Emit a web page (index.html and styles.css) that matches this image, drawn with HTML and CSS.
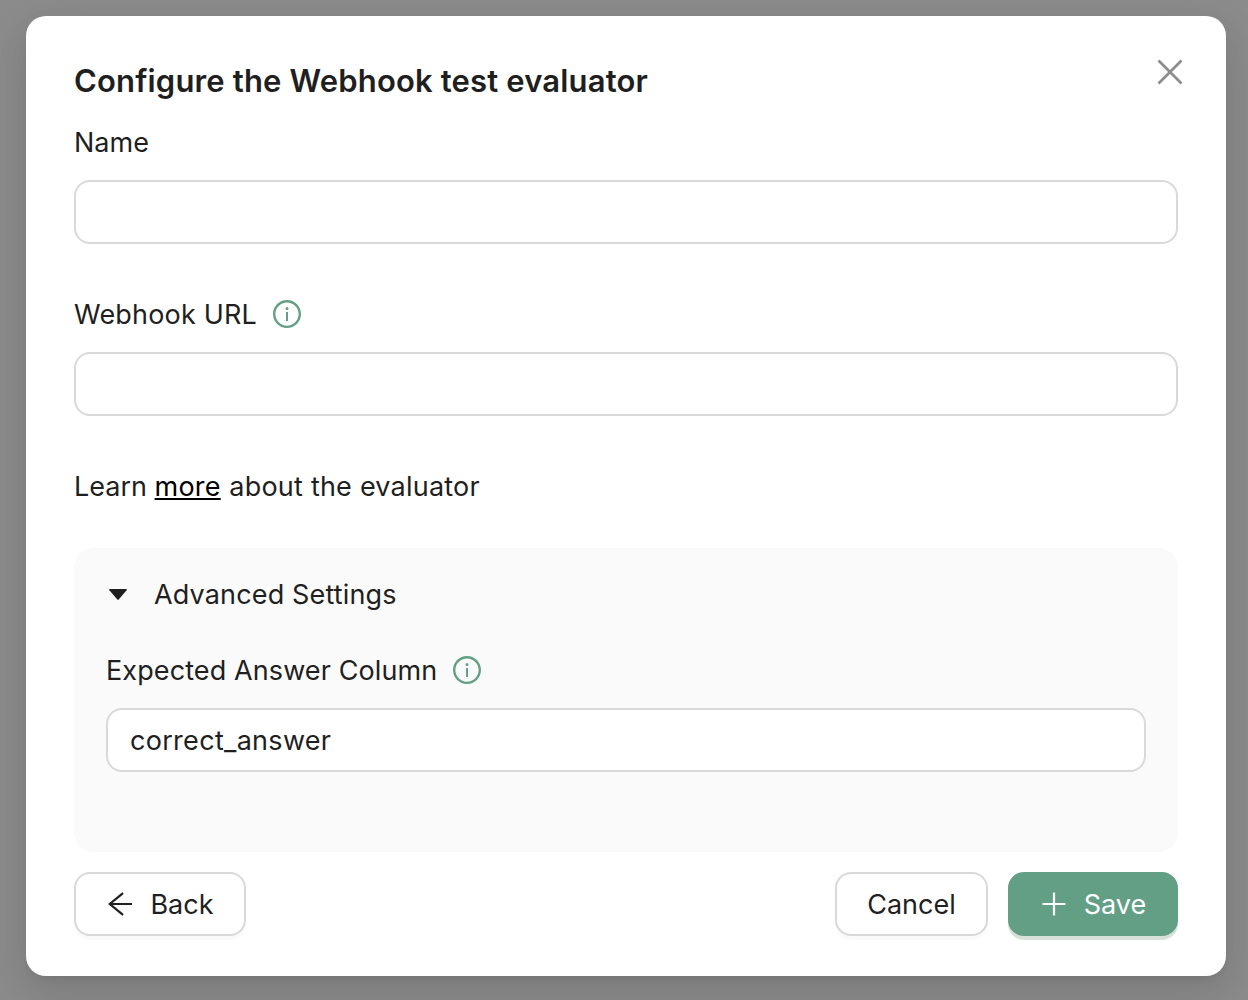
FILE: index.html
```html
<!DOCTYPE html>
<html lang="en">
<head>
<meta charset="utf-8">
<title>Configure evaluator</title>
<link rel="stylesheet" href="styles.css">
</head>
<body>
<main class="modal">
  <header class="modal-header">
    <h1 class="title">Configure the Webhook test evaluator</h1>
    <button class="close" aria-label="Close"><svg width="26" height="26" viewBox="0 0 26 26"><path d="M1.500 1.500 24.500 24.500M24.500 1.500 1.500 24.500" fill="none" stroke="currentColor" stroke-width="2.700"/></svg></button>
  </header>
  <div class="field">
    <label class="label" for="name"><span>Name</span></label>
    <input class="input" id="name" type="text">
  </div>
  <div class="field">
    <label class="label" for="url"><span class="t-url">Webhook URL</span>
      <svg class="info" viewBox="64 64 896 896"><path d="M512 64C264.600 64 64 264.600 64 512s200.600 448 448 448 448-200.600 448-448S759.400 64 512 64zm0 820c-205.400 0-372-166.600-372-372s166.600-372 372-372 372 166.600 372 372-166.600 372-372 372z"/><path d="M464 336a48 48 0 1 0 96 0 48 48 0 1 0-96 0zm72 112h-48c-4.400 0-8 3.600-8 8v272c0 4.400 3.600 8 8 8h48c4.400 0 8-3.600 8-8V456c0-4.400-3.600-8-8-8z"/></svg>
    </label>
    <input class="input" id="url" type="text">
  </div>
  <p class="learn">Learn <a class="more" href="#">more</a> <span class="t-about">about the evaluator</span></p>
  <section class="panel">
    <div class="panel-header">
      <svg class="caret" width="18" height="11" viewBox="0 0 18 11"><path d="M.8 0h16.400q1.200.2.400 1.200L9.700 10.600q-.7.700-1.400 0L.4 1.200Q-.4.200.8 0z" fill="currentColor"/></svg>
      <span class="t-advanced">Advanced Settings</span>
    </div>
    <label class="label" for="column"><span class="t-expected">Expected Answer Column</span>
      <svg class="info" viewBox="64 64 896 896"><path d="M512 64C264.600 64 64 264.600 64 512s200.600 448 448 448 448-200.600 448-448S759.400 64 512 64zm0 820c-205.400 0-372-166.600-372-372s166.600-372 372-372 372 166.600 372 372-166.600 372-372 372z"/><path d="M464 336a48 48 0 1 0 96 0 48 48 0 1 0-96 0zm72 112h-48c-4.400 0-8 3.600-8 8v272c0 4.400 3.600 8 8 8h48c4.400 0 8-3.600 8-8V456c0-4.400-3.600-8-8-8z"/></svg>
    </label>
    <input class="input t-value" id="column" type="text" value="correct_answer">
  </section>
  <footer class="footer">
    <button class="button back"><svg width="24" height="24" viewBox="0 0 24 24"><path d="M24 12H1.500M15 1.200 1.800 12 15 22.800" fill="none" stroke="currentColor" stroke-width="2.200"/></svg><span>Back</span></button>
    <button class="button cancel"><span>Cancel</span></button>
    <button class="button save"><svg width="24" height="24" viewBox="0 0 24 24"><path d="M12 .5v23M.5 12h23" fill="none" stroke="currentColor" stroke-width="2.200"/></svg><span>Save</span></button>
  </footer>
</main>
</body>
</html>
```
FILE: styles.css
```css
* { box-sizing: border-box; }
body {
  margin: 0;
  height: 1000px;
  overflow: hidden;
  padding: 16px 22px 24px 26px;
  background: #8c8c8c;
  color: #1f1f1f;
  font: 400 27px/44px Inter, "Liberation Sans", sans-serif;
}
.modal {
  height: 960px;
  padding: 40px 48px;
  border-radius: 20px;
  background: #fff;
  box-shadow: 0 12px 32px rgba(0,0,0,.08), 0 6px 12px -8px rgba(0,0,0,.12), 0 18px 56px 16px rgba(0,0,0,.05);
}
.modal-header { display: flex; justify-content: space-between; height: 64px; }
.title { margin: 0; font-size: 31px; line-height: 50px; font-weight: 600; letter-spacing: .16px; white-space: nowrap; }
.close { display: block; margin: 3px -5px 0 0; padding: 0; width: 26px; height: 26px; border: 0; background: none; color: #8c8c8c; }
.close svg, .button svg, .info, .caret { display: block; flex: none; }
.field { margin-bottom: 48px; }
.label { display: flex; align-items: center; gap: 16px; height: 44px; margin-bottom: 16px; white-space: nowrap; }
.label span, .panel-header span, .button span { padding-top: 2px; }
.t-url { letter-spacing: .18px; }
.t-about { letter-spacing: .22px; margin-left: 1px; }
.t-advanced { letter-spacing: .15px; }
.t-expected { letter-spacing: .1px; }
.info { width: 28px; height: 28px; fill: #639f85; }
.input {
  display: block;
  width: 100%;
  height: 64px;
  padding: 0 22px;
  border: 2px solid #d9d9d9;
  border-radius: 16px;
  background: #fff;
  color: inherit;
  font: inherit;
  outline: 0;
}
.t-value { letter-spacing: .3px; }
.learn { margin: 0 0 39px; padding-top: 1px; white-space: nowrap; }
.more { color: #000; letter-spacing: .2px; text-decoration: underline; text-decoration-thickness: 2px; text-underline-offset: 2px; text-decoration-skip-ink: none; }
.panel { height: 304px; padding: 24px 32px; border-radius: 20px; background: #fafafa; }
.panel-header { display: flex; align-items: center; gap: 27px; height: 44px; padding-left: 3px; margin-bottom: 32px; }
.footer { display: flex; gap: 20px; margin-top: 20px; }
.button {
  display: flex;
  align-items: center;
  justify-content: center;
  gap: 18px;
  height: 64px;
  padding: 0;
  border: 2px solid #d9d9d9;
  border-radius: 16px;
  background: #fff;
  color: inherit;
  font: inherit;
  box-shadow: 0 4px 0 rgba(0,0,0,.02);
}
.back { width: 172px; margin-right: auto; padding-left: 2px; }
.cancel { width: 153px; }
.save { width: 170px; padding-left: 2px; border-color: #639f85; background: #639f85; color: #fff; box-shadow: 0 4px 0 #d7e1da; }
```
